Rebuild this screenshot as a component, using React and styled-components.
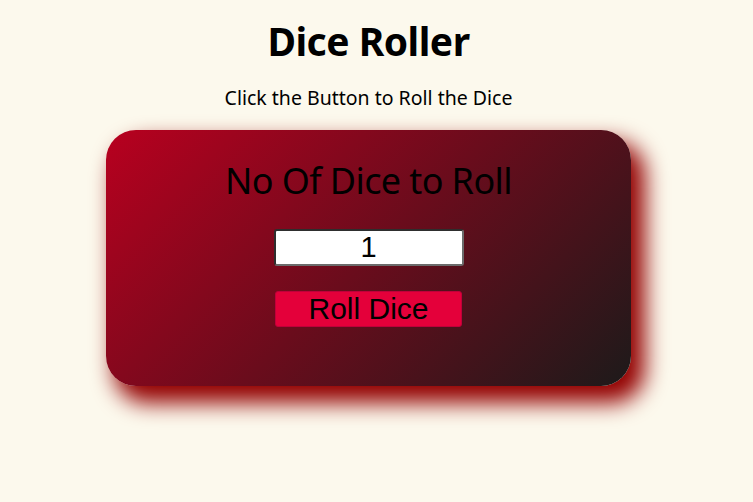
import React, { useState } from "react";
import styled, { createGlobalStyle } from "styled-components";

const Global = createGlobalStyle`
  html, body { margin: 0; padding: 0; background: #fcf9ed; }
  body { font-family: "Trebuchet MS", "Noto Sans", "DejaVu Sans", sans-serif; color: #000; }
`;

const Page = styled.main`
  display: flex;
  flex-direction: column;
  align-items: center;
  padding: 17px 16px 80px 0;
`;

const Title = styled.h1`
  margin: 0;
  font-size: 39px;
  font-weight: 700;
  line-height: 48px;
  letter-spacing: -0.5px;
`;

const Subtitle = styled.p`
  margin: 21px 0 0;
  font-size: 19.5px;
  line-height: 24px;
`;

const Card = styled.section`
  margin-top: 20px;
  width: 525px;
  height: 256px;
  box-sizing: border-box;
  border-radius: 30px;
  background: linear-gradient(135deg, #b8001f 0%, #6a0c1c 50%, #1d1a1a 100%);
  box-shadow: 11px 14px 22px 3px #930000;
  display: flex;
  flex-direction: column;
  align-items: center;
  padding-top: 29px;
`;

const CardHeading = styled.h2`
  margin: 0;
  font-size: 36px;
  font-weight: 400;
  line-height: 44px;
  letter-spacing: -0.6px;
`;

const CountInput = styled.input`
  margin-top: 26px;
  width: 190px;
  height: 37px;
  box-sizing: border-box;
  border: 2px solid #6b6b6b;
  border-top-color: #2e2e2e;
  border-left-color: #2e2e2e;
  border-radius: 3px;
  background: #fff;
  text-align: center;
  font-family: "Liberation Sans", Arial, sans-serif;
  font-size: 29px;
  color: #000;
  padding: 0;
`;

const RollButton = styled.button`
  margin-top: 25px;
  width: 187px;
  height: 36px;
  box-sizing: border-box;
  border: 1px solid #c0003a;
  border-radius: 3px;
  background: #e4003a;
  font-family: "Liberation Sans", Arial, sans-serif;
  font-size: 30px;
  line-height: 32px;
  color: #000;
  padding: 0;
  cursor: pointer;
`;

export default function App() {
  const [count, setCount] = useState("1");
  return (
    <>
      <Global />
      <Page>
        <Title>Dice Roller</Title>
        <Subtitle>Click the Button to Roll the Dice</Subtitle>
        <Card>
          <CardHeading>No Of Dice to Roll</CardHeading>
          <CountInput
            type="text"
            value={count}
            onChange={(e) => setCount(e.target.value)}
          />
          <RollButton type="button">Roll Dice</RollButton>
        </Card>
      </Page>
    </>
  );
}
